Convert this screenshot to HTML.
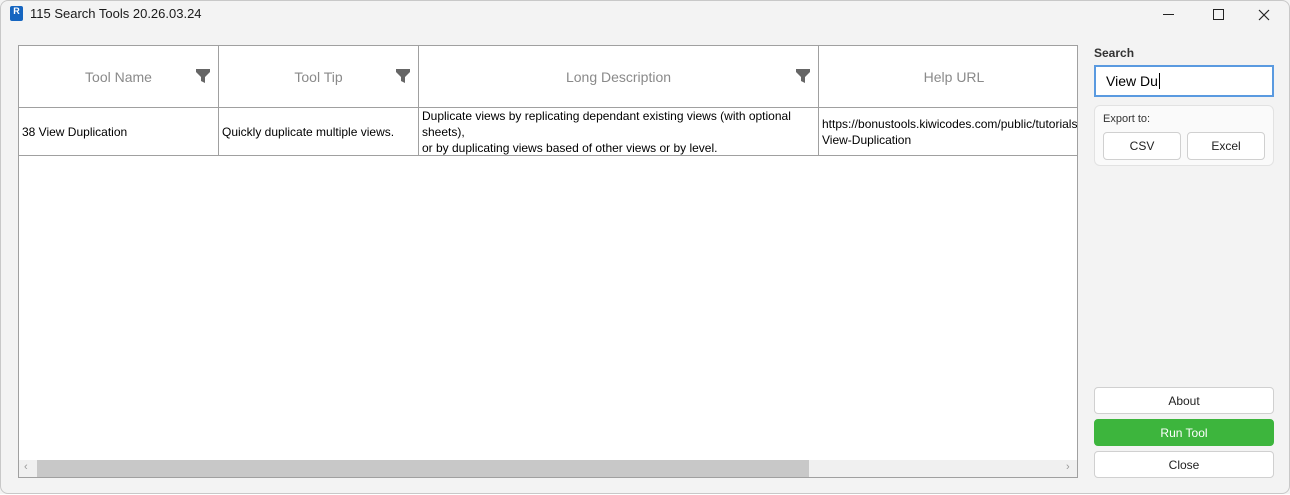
<!DOCTYPE html>
<html><head><style>
*{box-sizing:border-box;margin:0;padding:0}
body{width:1290px;height:495px;background:#fff;font-family:"Segoe UI","Liberation Sans",sans-serif;position:relative;overflow:hidden;font-size:12px;color:#000}
.win{position:absolute;left:0;top:0;width:1290px;height:494px;background:#f3f3f3}
.bord{position:absolute;left:0;top:0;width:1290px;height:494px;border:1px solid #c8c8c8;border-radius:8px;pointer-events:none}
.title{position:absolute;left:30px;top:6px;font-size:13px;color:#1a1a1a}
.abs{position:absolute}
.tbl{position:absolute;left:18px;top:45px;width:1060px;height:433px;background:#fff;border:1px solid #a0a0a0;overflow:hidden}
.h{position:absolute;top:0;height:62px;border-right:1px solid #a0a0a0;border-bottom:1px solid #a0a0a0;color:#8a8a8a;font-size:14px;display:flex;align-items:center;justify-content:center}
.c{position:absolute;top:62px;height:48px;border-right:1px solid #a0a0a0;border-bottom:1px solid #a0a0a0;padding-left:3px;font-size:12px;line-height:16px;display:flex;align-items:center}
.f{position:absolute;top:23px}
.btn{position:absolute;background:#fff;border:1px solid #d0d0d0;border-radius:4px;display:flex;align-items:center;justify-content:center;font-size:12px;color:#222}
</style></head><body>
<div class="win">
<div class="abs" style="left:10px;top:6px;width:13px;height:15px;background:#1565c0;border-radius:2px;color:#fff;font-size:9px;font-weight:bold;text-align:center;line-height:11px">R</div>
<div class="title">115 Search Tools 20.26.03.24</div>
<div class="abs" style="left:1163px;top:14px;width:11px;height:1px;background:#222"></div>
<div class="abs" style="left:1213px;top:9px;width:11px;height:11px;border:1px solid #222"></div>
<svg class="abs" style="left:1258px;top:9px" width="12" height="12"><path d="M1 1L11 11M11 1L1 11" stroke="#222" stroke-width="1.2"/></svg>

<div class="tbl">
<div class="h" style="left:0;width:200px">Tool Name</div>
<div class="h" style="left:200px;width:200px">Tool Tip</div>
<div class="h" style="left:400px;width:400px">Long Description</div>
<div class="h" style="left:800px;width:270px;border-right:none">Help URL</div>
<svg class="f" style="left:177px" width="14" height="14"><path d="M0 0H14V3L9 8V14L5 12V8L0 3Z" fill="#666"/></svg>
<svg class="f" style="left:377px" width="14" height="14"><path d="M0 0H14V3L9 8V14L5 12V8L0 3Z" fill="#666"/></svg>
<svg class="f" style="left:777px" width="14" height="14"><path d="M0 0H14V3L9 8V14L5 12V8L0 3Z" fill="#666"/></svg>
<div class="c" style="left:0;width:200px">38 View Duplication</div>
<div class="c" style="left:200px;width:200px">Quickly duplicate multiple views.</div>
<div class="c" style="left:400px;width:400px">Duplicate views by replicating dependant existing views (with optional<br>sheets),<br>or by duplicating views based of other views or by level.</div>
<div class="c" style="left:800px;width:270px;border-right:none;white-space:nowrap;line-height:16px">https://bonustools.kiwicodes.com/public/tutorials/<br>View-Duplication</div>
<div class="abs" style="left:0;top:414px;width:1060px;height:18px;background:#f0f0f0"></div>
<div class="abs" style="left:18px;top:414px;width:772px;height:18px;background:#c8c8c8"></div>
<div class="abs" style="left:5px;top:415px;color:#999;font-size:11px">‹</div>
<div class="abs" style="left:1047px;top:415px;color:#999;font-size:11px">›</div>
</div>

<div class="abs" style="left:1094px;top:46px;font-size:12px;font-weight:600;color:#333">Search</div>
<div class="abs" style="left:1094px;top:65px;width:180px;height:32px;background:#fff;border:2px solid #5a9ae0;padding-left:10px;font-size:14px;line-height:28px">View Du<span style="border-left:1px solid #000;margin-left:1px"></span></div>
<div class="abs" style="left:1094px;top:105px;width:180px;height:61px;background:#fafafa;border:1px solid #e2e2e2;border-radius:6px"></div>
<div class="abs" style="left:1103px;top:113px;font-size:11px;color:#333">Export to:</div>
<div class="btn" style="left:1103px;top:132px;width:78px;height:28px">CSV</div>
<div class="btn" style="left:1187px;top:132px;width:78px;height:28px">Excel</div>
<div class="btn" style="left:1094px;top:387px;width:180px;height:27px">About</div>
<div class="btn" style="left:1094px;top:419px;width:180px;height:27px;background:#3db53d;border-color:#3db53d;color:#fff">Run Tool</div>
<div class="btn" style="left:1094px;top:451px;width:180px;height:27px">Close</div>
</div>
<div class="bord"></div>
</body></html>
